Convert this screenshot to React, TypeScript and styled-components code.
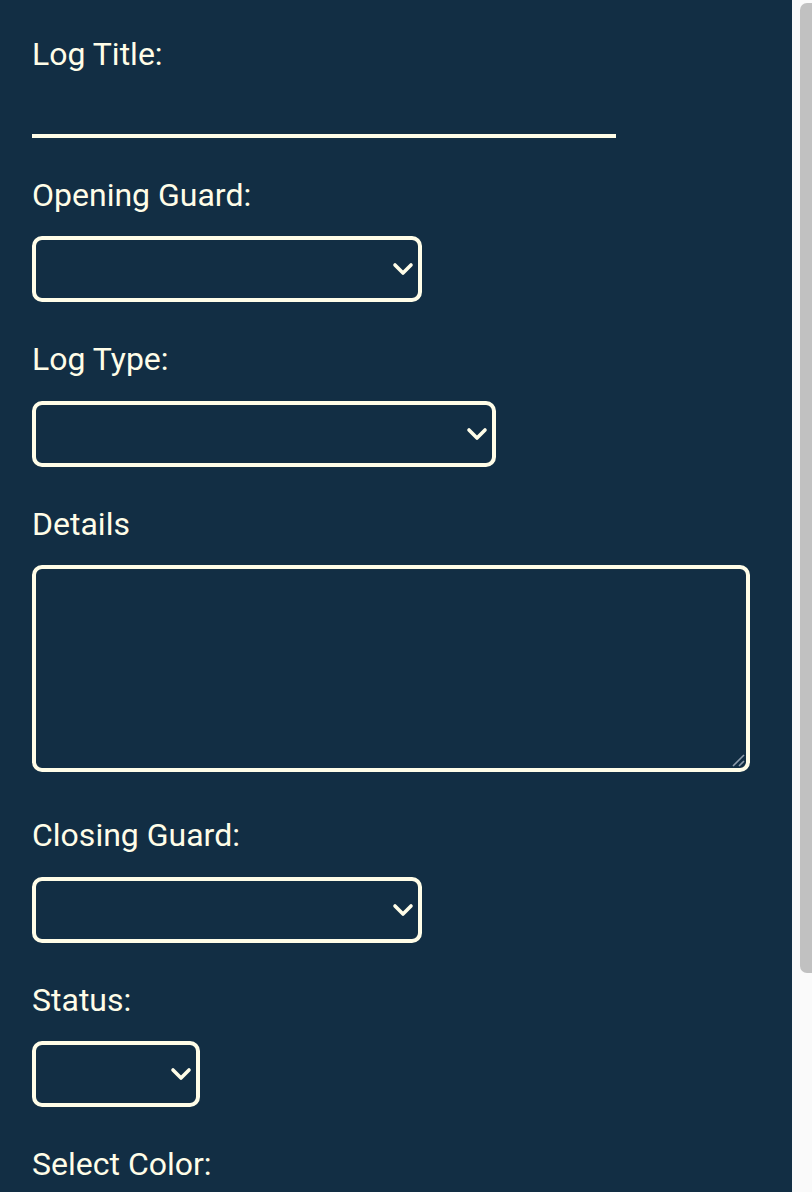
import React from "react";
import styled, { createGlobalStyle } from "styled-components";

const GlobalStyle = createGlobalStyle`
    html, body {
        margin: 0;
        padding: 0;
        background-color: #fafafa;
    }

    * {
        box-sizing: border-box;
    }
`;

const Chevron = () => (
    <ChevronIcon width="22" height="14" viewBox="0 0 22 14">
        <polyline
            points="3,3 11,11 19,3"
            fill="none"
            stroke="#fffde8"
            strokeWidth="3.6"
            strokeLinecap="round"
            strokeLinejoin="round"
        />
    </ChevronIcon>
);

const SelectField = ({ label, width }: { label: string; width: number }) => (
    <Field>
        <Label>{label}</Label>
        <SelectWrap $width={width}>
            <Select defaultValue="">
                <option value=""></option>
            </Select>
            <Chevron />
        </SelectWrap>
    </Field>
);

const App = () => {
    return (
        <>
            <GlobalStyle />
            <Form onSubmit={(e) => e.preventDefault()}>
                <Field>
                    <Label>Log Title:</Label>
                    <TitleInput type="text" />
                </Field>

                <SelectField label="Opening Guard:" width={390} />
                <SelectField label="Log Type:" width={464} />

                <Field>
                    <Label>Details</Label>
                    <AreaWrap>
                        <Details />
                        <ResizeHandle width="14" height="14" viewBox="0 0 14 14">
                            <line x1="2" y1="13" x2="13" y2="2" stroke="#8e9cab" strokeWidth="1.6" />
                            <line x1="8" y1="13" x2="13" y2="8" stroke="#8e9cab" strokeWidth="1.6" />
                        </ResizeHandle>
                    </AreaWrap>
                </Field>

                <SelectField label="Closing Guard:" width={390} />
                <SelectField label="Status:" width={168} />

                <Field>
                    <Label>Select Color:</Label>
                    <ColorInput type="color" defaultValue="#fffde8" />
                </Field>

                <SubmitButton type="submit">Save Log</SubmitButton>
            </Form>
            <ScrollThumb />
        </>
    );
};

export default App;

const Form = styled.form`
    background-color: #122e44;
    margin-right: 20px;
    padding: 36px 32px 64px 32px;
    font-family: Roboto, "Liberation Sans", sans-serif;
    color: #fffde8;
`;

const Field = styled.div`
    display: flex;
    flex-direction: column;
    align-items: flex-start;
    margin-bottom: 39px;
`;

const Label = styled.label`
    display: block;
    font-size: 32px;
    line-height: 37.5px;
    margin-bottom: 22px;
`;

const TitleInput = styled.input`
    display: block;
    width: 584px;
    height: 42px;
    background: transparent;
    border: none;
    border-bottom: 4px solid #fffde8;
    color: #fffde8;
    font-family: inherit;
    font-size: 28px;
    outline: none;
    padding: 0 4px;
`;

const SelectWrap = styled.div<{ $width: number }>`
    position: relative;
    width: ${(p) => p.$width}px;
    height: 66px;
`;

const Select = styled.select`
    appearance: none;
    -webkit-appearance: none;
    display: block;
    width: 100%;
    height: 100%;
    background: transparent;
    border: 4px solid #fffde8;
    border-radius: 10px;
    color: #fffde8;
    font-family: inherit;
    font-size: 28px;
    padding: 0 40px 0 12px;
    outline: none;
`;

const ChevronIcon = styled.svg`
    position: absolute;
    right: 8px;
    top: 50%;
    transform: translateY(-50%);
    pointer-events: none;
`;

const AreaWrap = styled.div`
    position: relative;
    width: 718px;
    height: 207px;
    margin-bottom: 6px;
`;

const Details = styled.textarea`
    display: block;
    width: 100%;
    height: 100%;
    background: transparent;
    border: 4px solid #fffde8;
    border-radius: 10px;
    color: #fffde8;
    font-family: inherit;
    font-size: 28px;
    padding: 10px 12px;
    resize: none;
    outline: none;
`;

const ResizeHandle = styled.svg`
    position: absolute;
    right: 5px;
    bottom: 5px;
    pointer-events: none;
`;

const ColorInput = styled.input`
    display: block;
    width: 100px;
    height: 66px;
    background: transparent;
    border: 4px solid #fffde8;
    border-radius: 10px;
    padding: 4px;
`;

const SubmitButton = styled.button`
    display: block;
    height: 76px;
    padding: 0 36px;
    background-color: #fffde8;
    color: #122e44;
    border: none;
    border-radius: 10px;
    font-family: inherit;
    font-size: 30px;
    font-weight: 500;
`;

const ScrollThumb = styled.div`
    position: fixed;
    top: 3px;
    right: 0;
    width: 12px;
    height: 970px;
    background-color: #c1c1c1;
    border-radius: 7px 0 0 7px;
    pointer-events: none;
`;
